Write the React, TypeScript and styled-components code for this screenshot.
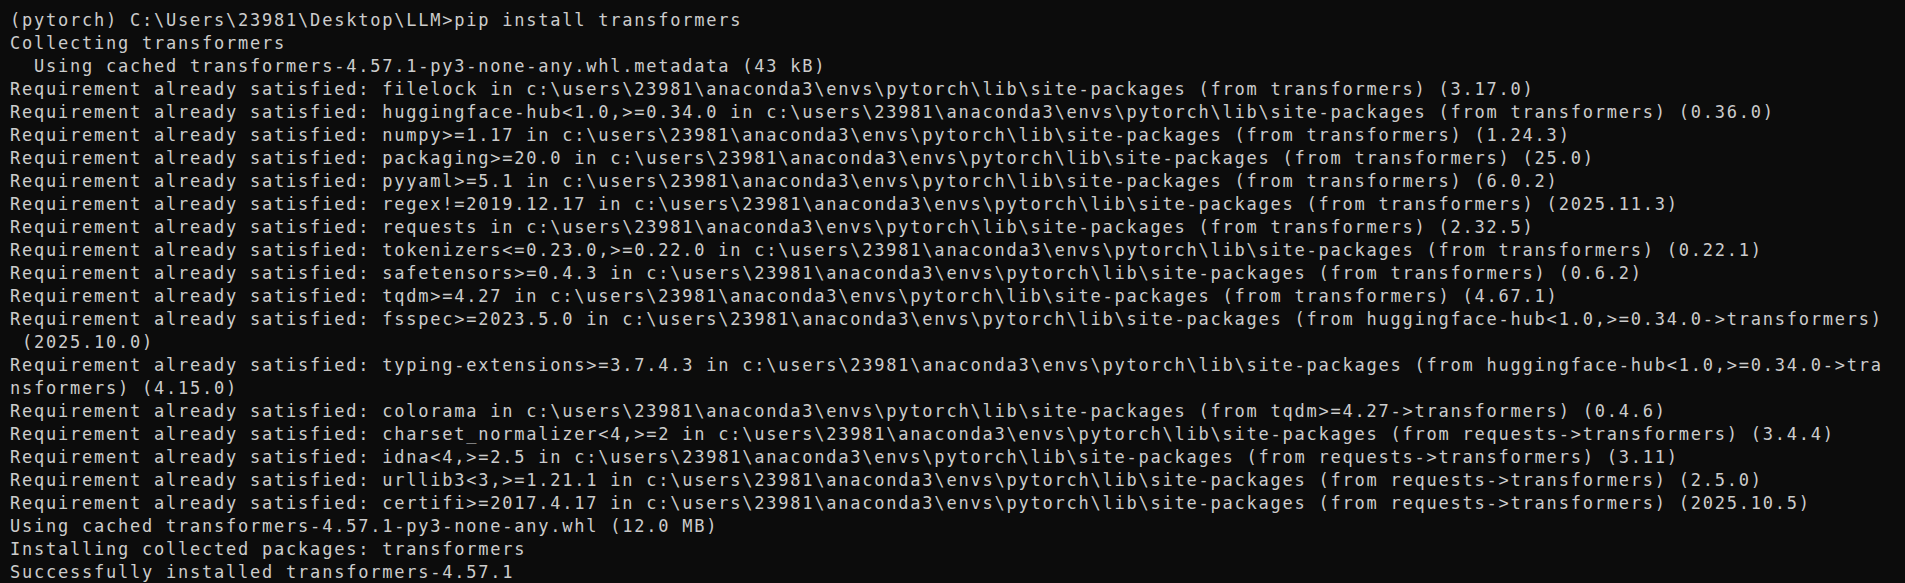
import React from "react";
import styled, { createGlobalStyle } from "styled-components";

const GlobalStyle = createGlobalStyle`
  html, body {
    margin: 0;
    padding: 0;
    background: #0c0c0c;
    overflow: hidden;
  }
`;

const Terminal = styled.main`
  box-sizing: border-box;
  width: 1905px;
  height: 583px;
  padding: 9px 0 0 10px;
  background: #0c0c0c;
  color: #cccccc;
  font-family: "DejaVu Sans Mono", "Liberation Mono", monospace;
  font-size: 17px;
  letter-spacing: 1.77px;
  overflow: hidden;
`;

const Line = styled.div`
  height: 23px;
  line-height: 23px;
  white-space: pre;
`;

const SP = String.raw`c:\users\23981\anaconda3\envs\pytorch\lib\site-packages`;
const RAS = "Requirement already satisfied: ";

const lines: string[] = [
  String.raw`(pytorch) C:\Users\23981\Desktop\LLM>pip install transformers`,
  "Collecting transformers",
  "  Using cached transformers-4.57.1-py3-none-any.whl.metadata (43 kB)",
  `${RAS}filelock in ${SP} (from transformers) (3.17.0)`,
  `${RAS}huggingface-hub<1.0,>=0.34.0 in ${SP} (from transformers) (0.36.0)`,
  `${RAS}numpy>=1.17 in ${SP} (from transformers) (1.24.3)`,
  `${RAS}packaging>=20.0 in ${SP} (from transformers) (25.0)`,
  `${RAS}pyyaml>=5.1 in ${SP} (from transformers) (6.0.2)`,
  `${RAS}regex!=2019.12.17 in ${SP} (from transformers) (2025.11.3)`,
  `${RAS}requests in ${SP} (from transformers) (2.32.5)`,
  `${RAS}tokenizers<=0.23.0,>=0.22.0 in ${SP} (from transformers) (0.22.1)`,
  `${RAS}safetensors>=0.4.3 in ${SP} (from transformers) (0.6.2)`,
  `${RAS}tqdm>=4.27 in ${SP} (from transformers) (4.67.1)`,
  `${RAS}fsspec>=2023.5.0 in ${SP} (from huggingface-hub<1.0,>=0.34.0->transformers)`,
  " (2025.10.0)",
  `${RAS}typing-extensions>=3.7.4.3 in ${SP} (from huggingface-hub<1.0,>=0.34.0->tra`,
  "nsformers) (4.15.0)",
  `${RAS}colorama in ${SP} (from tqdm>=4.27->transformers) (0.4.6)`,
  `${RAS}charset_normalizer<4,>=2 in ${SP} (from requests->transformers) (3.4.4)`,
  `${RAS}idna<4,>=2.5 in ${SP} (from requests->transformers) (3.11)`,
  `${RAS}urllib3<3,>=1.21.1 in ${SP} (from requests->transformers) (2.5.0)`,
  `${RAS}certifi>=2017.4.17 in ${SP} (from requests->transformers) (2025.10.5)`,
  "Using cached transformers-4.57.1-py3-none-any.whl (12.0 MB)",
  "Installing collected packages: transformers",
  "Successfully installed transformers-4.57.1",
];

export default function App() {
  return (
    <>
      <GlobalStyle />
      <Terminal>
        {lines.map((l, i) => (
          <Line key={i}>{l}</Line>
        ))}
      </Terminal>
    </>
  );
}
